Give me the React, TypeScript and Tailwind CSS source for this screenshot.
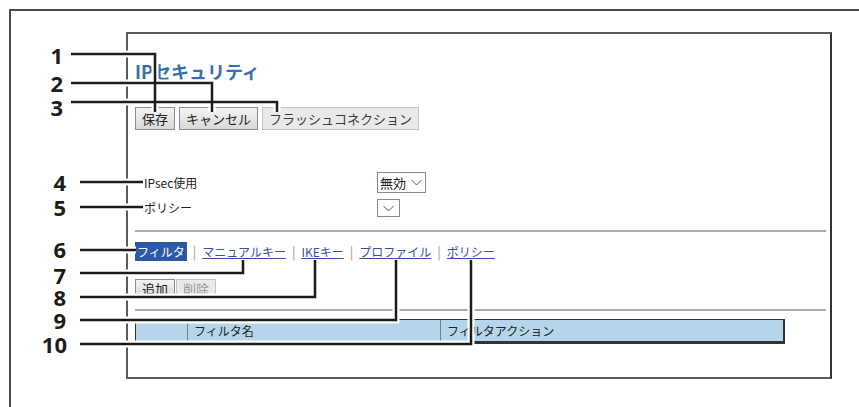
import React from "react";

const jp = { fontFamily: '"Noto Sans CJK JP", "Noto Sans", sans-serif' };

type Callout = { n: string; cls: string; pts: string };

const callouts: Callout[] = [
  { n: "1", cls: "top-[45px] w-[63px]", pts: "71,54 155,54 155,112" },
  { n: "2", cls: "top-[73px] w-[63px]", pts: "71,83 212,83 212,112" },
  { n: "3", cls: "top-[97px] w-[63px]", pts: "71,102 277,102 277,112" },
  { n: "4", cls: "top-[172px] w-[66px]", pts: "80,182 143,182" },
  { n: "5", cls: "top-[197px] w-[66px]", pts: "80,207 143,207" },
  { n: "6", cls: "top-[239px] w-[66px]", pts: "80,250 136,250" },
  { n: "7", cls: "top-[265px] w-[66px]", pts: "80,273 243,273 243,260" },
  { n: "8", cls: "top-[287px] w-[66px]", pts: "80,297 315,297 315,260" },
  { n: "9", cls: "top-[310px] w-[66px]", pts: "80,320 396,320 396,260" },
  { n: "10", cls: "top-[334px] w-[67px]", pts: "80,344 471,344 471,260" },
];

function Chevron() {
  return (
    <svg width="11" height="7" viewBox="0 0 11 7" className="shrink-0">
      <polyline points="0.5,1 5.5,6 10.5,1" fill="none" stroke="#555" strokeWidth="1" />
    </svg>
  );
}

function Btn({ children, disabled }: { children: React.ReactNode; disabled?: boolean }) {
  return (
    <div
      className={
        disabled
          ? "h-full px-[6px] flex items-center whitespace-nowrap border border-[#c4c4c4] bg-[#e9e9e9] text-[#3a3a3a]"
          : "h-full px-[6px] flex items-center whitespace-nowrap border border-[#8e8e8e] bg-gradient-to-b from-[#f3f3f3] to-[#d9d9d9] text-[#222]"
      }
    >
      {children}
    </div>
  );
}

function Sep() {
  return <span className="mx-[6px] text-[#999] text-[13px] leading-none">|</span>;
}

function Screen() {
  return (
    <div
      className="w-[706px] h-[347px] border-2 border-[#5a5a5a] border-r-[#333] pl-[7px] pr-[4px] pt-[27px] flex flex-col"
      style={jp}
    >
      <div className="h-[20px] leading-[20px] text-[18px] font-bold text-[#3a6fab]">IPセキュリティ</div>

      <div className="mt-[26px] h-[23px] flex gap-[4px] text-[13px]">
        <Btn>保存</Btn>
        <Btn>キャンセル</Btn>
        <Btn disabled>フラッシュコネクション</Btn>
      </div>

      <div className="mt-[42px] h-[21px] flex items-center text-[12px] text-[#222]">
        <div className="w-[242px] pl-[9px]">IPsec使用</div>
        <div className="h-full w-[49px] border border-[#8a8a8a] flex items-center gap-[5px] px-[2px] text-[13px] whitespace-nowrap">
          <span>無効</span>
          <Chevron />
        </div>
      </div>
      <div className="mt-[6px] h-[18px] flex items-center text-[12px] text-[#222]">
        <div className="w-[242px] pl-[9px]">ポリシー</div>
        <div className="h-full w-[23px] border border-[#8a8a8a] flex items-center justify-center">
          <Chevron />
        </div>
      </div>

      <div className="mt-[13px] border-t-2 border-[#aaa]" />

      <div className="mt-[10px] h-[19px] flex items-center text-[12px] whitespace-nowrap">
        <span className="h-full px-[2px] flex items-center bg-[#2c59a7] text-white">フィルタ</span>
        <Sep />
        <span className="text-[#3553a6] underline">マニュアルキー</span>
        <Sep />
        <span className="text-[#3553a6] underline">IKEキー</span>
        <Sep />
        <span className="text-[#3553a6] underline">プロファイル</span>
        <Sep />
        <span className="text-[#3553a6] underline">ポリシー</span>
      </div>

      <div className="mt-[18px] h-[20px] flex gap-[1px] text-[13px]">
        <Btn>追加</Btn>
        <div className="h-full px-[6px] flex items-center border border-[#c4c4c4] bg-[#e9e9e9] text-[#9a9a9a]">削除</div>
      </div>

      <div className="mt-[10px] border-t-2 border-[#aaa]" />

      <div className="mt-[8px] w-[650px] h-[25px] flex bg-[#b5d5ea] border-t border-l border-[#333] border-b-[3px] border-r-2 text-[12px] text-[#222]">
        <div className="w-[52px] border-r border-[#6f8191]" />
        <div className="w-[253px] border-r border-[#6f8191] pl-[6px] flex items-center">フィルタ名</div>
        <div className="flex-1 pl-[6px] flex items-center">フィルタアクション</div>
      </div>
    </div>
  );
}

export default function App() {
  return (
    <div className="relative w-[859px] h-[407px] bg-white overflow-hidden pt-[9px] pl-[9px]">
      <div className="h-[420px] border-t-2 border-l-2 border-[#4a4a4a] pl-[115px] pt-[21px]">
        <Screen />
      </div>

      <svg className="absolute inset-0 pointer-events-none" width="859" height="407" viewBox="0 0 859 407">
        {callouts.map((c) => (
          <polyline key={"h" + c.n} points={c.pts} fill="none" stroke="#fff" strokeWidth="7" strokeLinejoin="miter" />
        ))}
        {callouts.map((c) => (
          <polyline key={"l" + c.n} points={c.pts} fill="none" stroke="#1c1c1c" strokeWidth="2.5" strokeLinejoin="miter" />
        ))}
      </svg>

      {callouts.map((c) => (
        <div
          key={c.n}
          className={"absolute left-0 text-right text-[22px] leading-[20px] font-bold text-[#1c1c1c] " + c.cls}
          style={{ fontFamily: '"Noto Sans", sans-serif' }}
        >
          {c.n}
        </div>
      ))}
    </div>
  );
}
